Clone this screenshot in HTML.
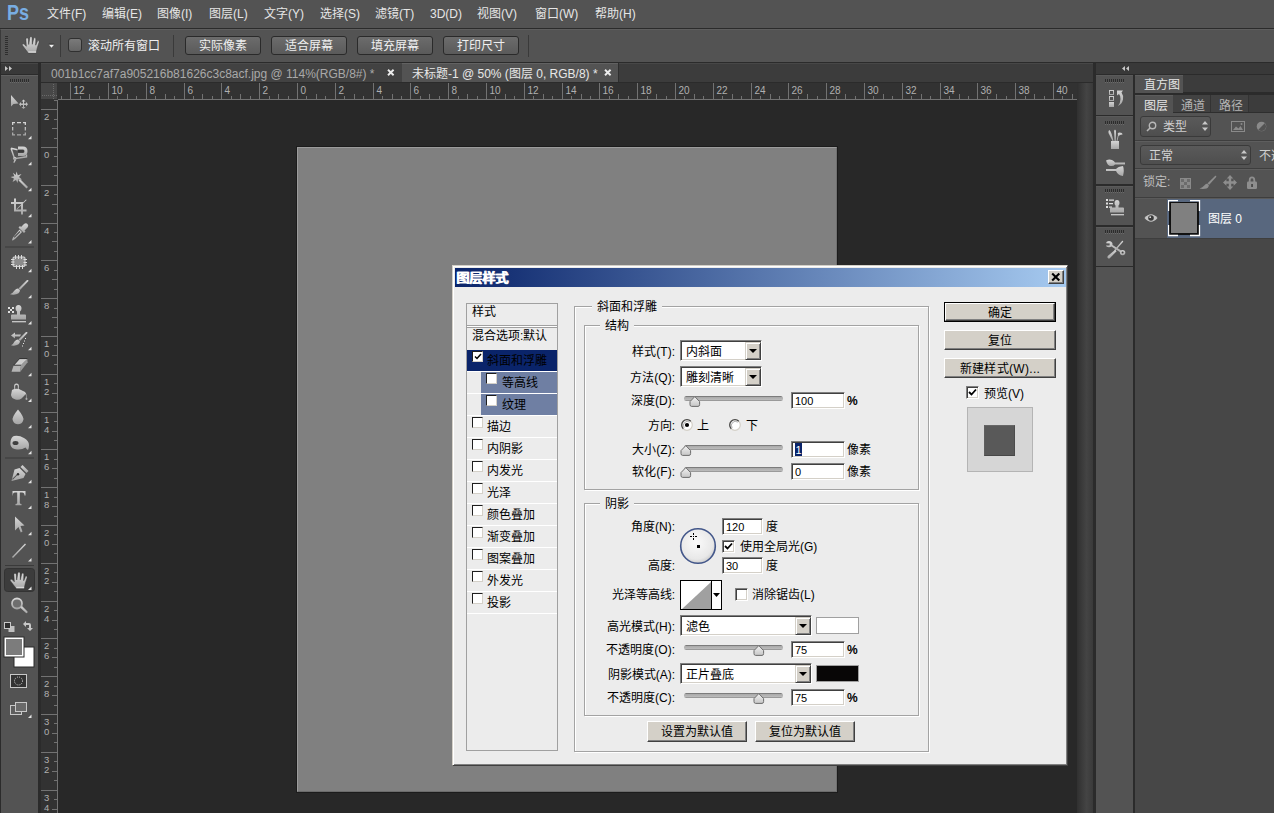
<!DOCTYPE html>
<html lang="zh-CN">
<head>
<meta charset="utf-8">
<style>
*{box-sizing:border-box}
html,body{margin:0;padding:0}
body{width:1274px;height:813px;position:relative;overflow:hidden;background:#282828;font-family:"Liberation Sans",sans-serif;font-size:12px;line-height:1}
.a{position:absolute}
.t{position:absolute;white-space:nowrap;line-height:12px}
.mn{color:#e6e6e6;top:8px;font-size:12px}
.obtn{position:absolute;top:36px;height:19px;width:76px;border:1px solid #2a2a2a;border-radius:3px;background:linear-gradient(#6c6c6c,#5a5a5a);color:#f0f0f0;text-align:center;line-height:19px;font-size:12px}
.tool{position:absolute;left:0;width:38px;height:26px}
.grip{position:absolute;height:3px;background:repeating-linear-gradient(90deg,#2e2e2e 0 1px,transparent 1px 2px)}

.dlg{position:absolute;left:452px;top:265px;width:616px;height:501px;background:#ececec;border:1px solid;border-color:#d4d0c8 #404040 #404040 #d4d0c8;box-shadow:inset 1px 1px 0 #fff,inset -1px -1px 0 #808080}
.d{position:absolute;white-space:nowrap;color:#000;font-size:12px;line-height:12px;padding-top:1px}
.lbl{position:absolute;white-space:nowrap;color:#000;font-size:12px;line-height:12px;padding-top:1px;left:515px;width:160px;text-align:right}
.sunk{position:absolute;background:#fff;border:1px solid;border-color:#808080 #fff #fff #808080;box-shadow:inset 1px 1px 0 #404040,inset -1px -1px 0 #d4d0c8}
.inp{position:absolute;background:#fff;border:1px solid;border-color:#808080 #fff #fff #808080;box-shadow:inset 1px 1px 0 #404040,inset -1px -1px 0 #d4d0c8;font-size:11px;line-height:17px;padding-left:3px;color:#000}
.rais{position:absolute;background:#d4d0c8;border:1px solid;border-color:#fff #404040 #404040 #fff;box-shadow:inset -1px -1px 0 #808080;text-align:center;color:#000;font-size:12px}
.grp{position:absolute;border:1px solid #a3a3a3;box-shadow:inset 1px 1px 0 #fff,1px 1px 0 #fff}
.gl{position:absolute;background:#ececec;padding:1px 5px 0 5px;font-size:12px;line-height:12px;white-space:nowrap}
.cbx{position:absolute;width:11px;height:11px;background:#fff;border:1px solid;border-color:#1e1e1e #d4d0c8 #d4d0c8 #1e1e1e}
.cb13{position:absolute;width:13px;height:13px;background:#fff;border:1px solid;border-color:#808080 #fff #fff #808080;box-shadow:inset 1px 1px 0 #404040,inset -1px -1px 0 #d4d0c8}
.row{position:absolute;left:467px;width:90px;height:22px;border-bottom:1px solid #fff}
.trk{position:absolute;width:99px;height:5px;border-radius:3px;background:linear-gradient(#7c7c7c 0,#7c7c7c 1px,#a9a9a9 1px,#bcbcbc 4px,#9a9a9a 4px)}
.thm{position:absolute;width:12px;height:11px}
.dd{position:absolute;top:1px;right:0;width:16px;bottom:0;background:#d4d0c8;border:1px solid;border-color:#d4d0c8 #404040 #404040 #d4d0c8;box-shadow:inset 1px 1px 0 #fff,inset -1px -1px 0 #808080}
.dd:after{content:"";position:absolute;left:2.5px;top:5.5px;border-left:4px solid transparent;border-right:4px solid transparent;border-top:4px solid #000}
</style>
</head>
<body>
<!-- menu bar -->
<div class="a" style="left:0;top:0;width:1274px;height:28px;background:#535353"></div>
<div class="a" style="left:0;top:28px;width:1274px;height:1px;background:#2b2b2b"></div>
<div class="t" style="left:7px;top:2px;font-size:22px;line-height:22px;font-weight:bold;color:#78ade2;transform:scaleX(0.82);transform-origin:0 0;letter-spacing:0px">Ps</div>
<div class="t mn" style="left:47px">文件(F)</div>
<div class="t mn" style="left:102px">编辑(E)</div>
<div class="t mn" style="left:157px">图像(I)</div>
<div class="t mn" style="left:209px">图层(L)</div>
<div class="t mn" style="left:264px">文字(Y)</div>
<div class="t mn" style="left:320px">选择(S)</div>
<div class="t mn" style="left:375px">滤镜(T)</div>
<div class="t mn" style="left:430px">3D(D)</div>
<div class="t mn" style="left:477px">视图(V)</div>
<div class="t mn" style="left:535px">窗口(W)</div>
<div class="t mn" style="left:595px">帮助(H)</div>
<!-- options bar -->
<div class="a" style="left:0;top:29px;width:1274px;height:33px;background:#535353;border-top:1px solid #5e5e5e;border-left:1px solid #3a3a3a"></div>
<div class="a" style="left:0;top:62px;width:1274px;height:1px;background:#2b2b2b"></div>
<div class="a" style="left:5px;top:36px;width:3px;height:20px;background:repeating-linear-gradient(#2e2e2e 0 1px,transparent 1px 2px)"></div>
<svg class="a" style="left:0;top:0" width="60" height="60"><defs><linearGradient id="hg" x1="0" y1="0" x2="0" y2="1"><stop offset="0" stop-color="#e2e2e2"/><stop offset="1" stop-color="#a6a6a6"/></linearGradient>
<symbol id="hand" viewBox="0 0 60 60"><path d="M28 52.8 L22.3 45.2 Q21.8 43.9 23 43.7 Q24 43.6 25 44.8 L26.3 46.3 L25.9 39.2 Q25.9 37.7 27 37.7 Q28.2 37.7 28.3 39.2 L28.7 44.5 L29.8 38 Q29.9 36.4 31 36.4 Q32.1 36.4 32.1 38 L32.3 44.3 L33.6 39 Q33.8 37.5 34.8 37.5 Q35.9 37.6 35.8 39 L35.7 45.2 L37.1 42 Q37.4 40.5 38.3 40.6 Q39.4 40.8 39.1 42.2 L37.4 47.5 L36.2 52.8 Z" fill="url(#hg)" stroke="#353535" stroke-width="0.5"/><rect x="28.3" y="51.3" width="7.8" height="1.5" fill="#d8d8d8"/></symbol></defs>
<use href="#hand" x="0" y="0" width="60" height="60"/></svg>
<svg class="a" style="left:48px;top:43px" width="7" height="5"><path d="M0.8 1.5 H6.2 L3.5 4.8 Z" fill="#f0f0f0"/><rect x="0.8" y="0.6" width="5.4" height="0.9" fill="#333"/></svg>
<div class="a" style="left:60px;top:35px;width:1px;height:22px;background:#3a3a3a"></div>
<div class="a" style="left:68px;top:38px;width:14px;height:14px;border:1.5px solid #303030;border-radius:3px;background:linear-gradient(#7a7a7a,#656565)"></div>
<div class="t" style="left:88px;top:40px;color:#f0f0f0">滚动所有窗口</div>
<div class="a" style="left:173px;top:35px;width:1px;height:22px;background:#3a3a3a"></div>
<div class="obtn" style="left:185px">实际像素</div>
<div class="obtn" style="left:271px">适合屏幕</div>
<div class="obtn" style="left:357px">填充屏幕</div>
<div class="obtn" style="left:443px">打印尺寸</div>
<div class="a" style="left:528px;top:35px;width:1px;height:22px;background:#3a3a3a"></div>
<!-- tool panel -->
<div class="a" style="left:0;top:63px;width:41px;height:750px;background:#2b2b2b"></div>
<div class="a" style="left:1px;top:63px;width:37px;height:11px;background:#393939;border-top:1px solid #464646"></div>
<svg class="a" style="left:5px;top:66px" width="8" height="5"><path d="M0 0 L3 2.5 L0 5 Z M4 0 L7 2.5 L4 5 Z" fill="#c8c8c8"/></svg>
<div class="a" style="left:1px;top:75px;width:37px;height:738px;background:#535353;border-top:1px solid #606060"></div>
<svg class="a" style="left:10px;top:79px" width="20" height="4"><defs><pattern id="gp0" width="2" height="4" patternUnits="userSpaceOnUse"><rect x="0" y="0" width="1" height="3" fill="#2c2c2c"/><rect x="0" y="3" width="1" height="1" fill="#6a6a6a"/></pattern></defs><rect x="0" y="0" width="20" height="4" fill="url(#gp0)"/></svg>
<!-- doc area -->
<div class="a" style="left:41px;top:63px;width:1052px;height:20px;background:#3c3c3c;border-top:1px solid #474747"></div>
<div class="a" style="left:618px;top:63px;width:1px;height:19px;background:#2e2e2e"></div>
<div class="a" style="left:41px;top:63px;width:361px;height:19px;background:#424242;border-top:1px solid #4a4a4a"></div>
<div class="t" style="left:51px;top:68px;color:#a9a9a9">001b1cc7af7a905216b81626c3c8acf.jpg @ 114%(RGB/8#) *</div>
<svg class="a" style="left:387px;top:69px" width="8" height="7"><path d="M1 0.8 L6.6 6.2 M6.6 0.8 L1 6.2" stroke="#ececec" stroke-width="1.9"/></svg>
<div class="a" style="left:402px;top:63px;width:216px;height:20px;background:#535353;border-top:1px solid #626262"></div>
<div class="t" style="left:412px;top:68px;color:#e8e8e8">未标题-1 @ 50% (图层 0, RGB/8) *</div>
<svg class="a" style="left:604px;top:69px" width="8" height="7"><path d="M1 0.8 L6.6 6.2 M6.6 0.8 L1 6.2" stroke="#ececec" stroke-width="1.9"/></svg>
<div class="a" style="left:41px;top:82px;width:1052px;height:1px;background:#2b2b2b"></div>
<div class="a" style="left:1077px;top:83px;width:16px;height:730px;background:linear-gradient(90deg,#303030,#444 60%,#3a3a3a)"></div>
<!-- document -->
<div class="a" style="left:296px;top:146px;width:542px;height:647px;background:#1c1c1c"></div>
<div class="a" style="left:297px;top:147px;width:540px;height:645px;background:#808080;border-top:1px solid #9c9c9c;border-left:1px solid #9c9c9c;border-right:1px solid #707070;border-bottom:1px solid #6c6c6c"></div>
<!-- tools icons -->
<svg class="a" style="left:0;top:0" width="41" height="813">
<defs>
<linearGradient id="ig" x1="0" y1="0" x2="0" y2="1"><stop offset="0" stop-color="#d6d6d6"/><stop offset="1" stop-color="#a4a4a4"/></linearGradient>
<symbol id="tri"><path d="M3.5 0 V3.5 H0 Z" fill="#e6e6e6"/></symbol>
</defs>
<g fill="url(#ig)" stroke="none">
<!-- move -->
<path d="M11 95 L11 106.5 L13.5 104 L18.5 103.5 Z"/>
<path d="M23.5 99.5 L21.5 101.5 H23 V103.5 H21 V102 L19 104.3 L21 106.5 V105 H23 V107 H21.5 L23.5 109 L25.5 107 H24 V105 H26 V106.5 L28 104.3 L26 102 V103.5 H24 V101.5 H25.5 Z"/>
<!-- marquee -->
<path d="M12 122 h3 v1.3 h-1.7 v1.7 h-1.3 Z M17 122 h4 v1.3 h-4 Z M23 122 h3 v3 h-1.3 v-1.7 h-1.7 Z M12 127 h1.3 v3.5 h-1.3 Z M24.7 127 h1.3 v3.5 h-1.3 Z M12 132.5 h1.3 v1.7 h1.7 v1.3 h-3 Z M17 134.2 h4 v1.3 h-4 Z M24.7 132.5 h1.3 v3 h-3 v-1.3 h1.7 Z"/>
<!-- lasso magnetic -->
<path d="M11 148.3 L17.5 149.8 M11 148.3 L14.6 158.8 L26.5 156.8 V154.5" fill="none" stroke="url(#ig)" stroke-width="1.4"/>
<path d="M18 146.5 H23 Q27.5 146.5 27.5 151.2 Q27.5 156 23 156 H18 V153 H23 Q24.5 153 24.5 151.2 Q24.5 149.5 23 149.5 H18 Z" fill="url(#ig)"/>
<path d="M18 150 H23 Q24 150 24 151.2 Q24 152.5 23 152.5 H18 Z" fill="#3a3a3a"/>
<circle cx="14.8" cy="158.6" r="1.3" fill="none" stroke="url(#ig)" stroke-width="1"/>
<path d="M15.3 159.8 L13.8 162.8" stroke="url(#ig)" stroke-width="1.4"/>
<!-- magic wand -->
<path d="M16.5 171.5 L17.8 175.2 L21.5 174 L19 177 L22 179.5 L18.2 179.5 L17.5 183 L16 180 L12.5 182 L14 178.5 L10.5 177 L14.3 176.3 L13 172.7 L15.8 175 Z"/>
<path d="M18.5 180.5 L20 179 L28 187 L26.5 188.5 Z"/>
<!-- crop -->
<path d="M14 198.5 H16 V202 H23 V209.5 H26.5 V211.5 H23 V214.5 H21 V211.5 H14 V204 H11 V202 H14 Z M16 204 V209.5 H21 V204 Z" fill-rule="evenodd"/>
<path d="M16.5 209 L26 199.5 L26.6 200.1 L17.1 209.6 Z"/>
<!-- eyedropper -->
<path d="M21 227 L24 224 Q26 222.5 27.5 224 Q29 225.5 27.5 227.5 L24.5 230.5 L25.5 231.5 L24 233 L18.5 227.5 L20 226 Z"/>
<path d="M19.5 229.5 L22 232 L15 239 Q13 240.5 12 240.5 Q12 239.5 13 237.5 Z M19.5 231 L13.8 237 L14.6 237.8 L20.5 232 Z" fill-rule="evenodd"/>
<!-- healing/patch -->
<path d="M14 257 H24 L25 258 V265.5 L24 266.5 H14 L13 265.5 V258 Z" fill="#8c8c8c" stroke="#d0d0d0" stroke-width="1.1"/>
<path d="M15 255 h1 v4 h-1 Z M18 255 h1 v4 h-1 Z M21 255 h1 v4 h-1 Z M16 265 h1 v4 h-1 Z M19 265 h1 v4 h-1 Z M22 265 h1 v4 h-1 Z M11 259 h3.5 v1 h-3.5 Z M11 261.5 h3.5 v1 h-3.5 Z M11 264 h3.5 v1 h-3.5 Z M23.5 259 h3.5 v1 h-3.5 Z M23.5 262 h3.5 v1 h-3.5 Z M23.5 264.5 h3.5 v1 h-3.5 Z" fill="#dcdcdc"/>
<!-- brush -->
<path d="M27 280 Q28.5 279.5 28.5 281 L20 290 L18.5 288.5 Z"/>
<path d="M18 288.5 L20 290.5 Q19.5 294 15 294.5 Q12 295 10 294.3 Q13 293 14.5 290.5 Q16 288.5 18 288.5 Z"/>
<!-- stamp -->
<path d="M8 307 h2 v2 h-2 Z M12 307 h2 v2 h-2 Z M10 309 h2 v2 h-2 Z M8 311 h2 v2 h-2 Z M12 311 h2 v2 h-2 Z" fill="#e0e0e0"/>
<path d="M18.5 305 Q21.5 305 21.5 308.5 Q21.5 310.5 20 311.5 V314.5 H25 Q26 314.5 26 315.5 V319.5 H11 V315.5 Q11 314.5 12 314.5 H17 V311.5 Q15.5 310.5 15.5 308.5 Q15.5 305 18.5 305 Z"/>
<path d="M12 321 H26 V322.5 H12 Z"/>
<!-- history brush -->
<path d="M11 335.5 L15 332.5 V334.5 H21 L20 336.5 H15 V338.5 Z"/>
<path d="M26 332 Q27.5 331.5 27.5 333 L20 341 L18.5 339.5 Z"/>
<path d="M18 339.5 L20 341.5 Q19.5 345 15 345.5 Q12.5 346 11 345.3 Q13.5 344 14.5 341.5 Q16 339.5 18 339.5 Z"/>
<path d="M25 338 h1 v1 h-1 Z M24 340.5 h1 v1 h-1 Z M23 343 h1 v1 h-1 Z M22 345.5 h1 v1 h-1 Z" fill="#e8e8e8"/>
<!-- eraser -->
<path d="M19.3 358.9 H27.3 L21 365.2 H13.7 Z" fill="#cdcdcd"/>
<path d="M13.7 365.2 H21 L20.3 371.8 H11.5 Z" fill="#b4b4b4"/>
<path d="M21 365.2 L27.3 358.9 L27.6 362.3 L20.3 371.8 Z" fill="#9a9a9a"/>
<path d="M19.3 358.6 H27.3 M13.5 365.2 H21 M13.7 365.2 L19.3 358.9" fill="none" stroke="#2a2a2a" stroke-width="0.8"/>
<!-- paint bucket -->
<path d="M16.5 383.5 Q19 383.5 19 386.5 V389 L17.8 389 V386.5 Q17.8 384.8 16.5 384.8 Q15.2 384.8 15.2 386.5 V389 H14 V386.5 Q14 383.5 16.5 383.5 Z"/>
<path d="M12 390 Q15 388 19 389 L24 391.5 Q26.5 393 24.5 395.5 L21.5 398.5 Q19 400.5 15.5 399.5 Q11.5 398.5 11 395 Z"/>
<path d="M23.5 391.5 Q26.5 392 26.5 396 V397.5 Q27.5 398 27.5 399 Q27.5 400 26.5 400 Q25.5 400 25.5 399 Q25.5 398 26 397.5 V396 Q26 393.5 23.5 393.5 Z"/>
<!-- blur drop -->
<path d="M18 409.5 Q21 413 22.5 416 Q24 418.5 23 421 Q21.5 424.3 18 424.3 Q14.5 424.3 13 421 Q12 418.5 13.5 416 Q15 413 18 409.5 Z"/>
<!-- dodge -->
<path d="M14 436 Q19 435 24 438 Q29 441 29 445 Q29 448 28 450 Q26.5 449 25.5 447.5 Q22 450 17 449.5 Q11.5 449 10.5 445 Q10 440 12 437.5 Q13 436.3 14 436 Z"/>
<path d="M15.5 441 Q18.5 441 18.5 443 Q18.5 445 15.5 445 Q12.5 445 12.5 443 Q12.5 441 15.5 441 Z" fill="#404040"/>
<!-- pen -->
<path d="M22.5 465 L28.5 471 L26.5 473 L20.5 467 Z"/>
<path d="M19.5 468 L25.5 474 L23.5 478 L11.5 481 L14.5 469.5 Z M12.8 479.8 L18 474.6 L17.3 473.9 L12.1 479.1 Z" fill-rule="evenodd"/>
<circle cx="18" cy="474.3" r="1.2" fill="#303030"/>
<!-- type T -->
<path d="M12.5 491 H25.5 V495.5 H24.5 Q24.5 492.5 22 492.5 H19.8 V503 Q19.8 504 21.5 504 V505.3 H15.5 V504 Q17.2 504 17.2 503 V492.5 H15 Q12.8 492.5 12.8 495.5 H12.5 Z"/>
<!-- path selection -->
<path d="M15 516.5 L24.5 525.5 L20.5 526 L22.5 531.5 L20.8 532.5 L18.5 527 L15 530.5 Z"/>
<!-- line -->
<path d="M25 543.5 L26 544.5 L13 558 L12 557 Z"/>
</g>
<!-- corner triangles -->
<g fill="#e4e4e4"><path d="M31.5 135.7 V139.2 H28 Z"/><path d="M31.5 161.7 V165.2 H28 Z"/><path d="M31.5 187.8 V191.3 H28 Z"/><path d="M31.5 213.8 V217.3 H28 Z"/><path d="M31.5 239.9 V243.4 H28 Z"/><path d="M31.5 268.7 V272.2 H28 Z"/><path d="M31.5 294.8 V298.3 H28 Z"/><path d="M31.5 320.9 V324.4 H28 Z"/><path d="M31.5 346.7 V350.2 H28 Z"/><path d="M31.5 372.8 V376.3 H28 Z"/><path d="M31.5 398.4 V401.9 H28 Z"/><path d="M31.5 424.7 V428.2 H28 Z"/><path d="M31.5 450.8 V454.3 H28 Z"/><path d="M31.5 479.8 V483.3 H28 Z"/><path d="M31.5 505.6 V509.1 H28 Z"/><path d="M31.5 531.7 V535.2 H28 Z"/><path d="M31.5 557.9 V561.4 H28 Z"/><path d="M31.5 586.5 V590.0 H28 Z"/><path d="M31.5 714.5 V718.0 H28 Z"/></g>
<!-- separators -->
<rect x="5" y="246.5" width="29" height="1" fill="#3a3a3a"/>
<rect x="5" y="457.5" width="29" height="1" fill="#3a3a3a"/>
<rect x="5" y="565" width="29" height="1" fill="#3a3a3a"/>
<!-- hand selected -->
<rect x="4.5" y="568.5" width="30" height="23" rx="3" fill="#3c3c3c" stroke="#333"/>
<use href="#hand" x="-12" y="535.5" width="60" height="60"/>
<path d="M31.5 586.5 V590 H28 Z" fill="#e4e4e4"/>
<!-- zoom -->
<circle cx="17" cy="603.5" r="5" fill="#6e6e6e" stroke="url(#ig)" stroke-width="1.8"/>
<path d="M20.3 607.8 L22 606 L27.5 611.5 Q28 613 26.3 613.3 Z" fill="url(#ig)"/>
<!-- default colors -->
<rect x="8.5" y="626" width="6" height="6" fill="#c0c0c0"/>
<rect x="4.5" y="622.5" width="6" height="6" fill="#2e2e2e" stroke="#c8c8c8" stroke-width="1"/>
<!-- swap -->
<path d="M23 624 L26 621 V623 H29 Q31 623 31 625 V628 H33 L30 631 L27 628 H29 V625 H26 V627 Z" fill="#c8c8c8"/>
<!-- colors -->
<rect x="14" y="647" width="20" height="20" fill="#fff" stroke="#2a2a2a" stroke-width="1"/>
<rect x="4" y="637" width="20" height="20" fill="#fff" stroke="#2a2a2a" stroke-width="1"/>
<rect x="6" y="639" width="16" height="16" fill="#7c7c7c"/>
<!-- quick mask -->
<rect x="10.5" y="674.5" width="16" height="13" fill="#333" stroke="#c8c8c8" stroke-width="1"/>
<circle cx="18.5" cy="681" r="4" fill="none" stroke="#d0d0d0" stroke-width="1" stroke-dasharray="1 1.1"/>
<!-- screen mode -->
<rect x="10.5" y="705.5" width="11" height="9" fill="#5e5e5e" stroke="#c8c8c8"/>
<rect x="15.5" y="702.5" width="11" height="9" fill="#6a6a6a" stroke="#c8c8c8"/>
</svg>
<svg class="a" style="left:41px;top:83px" width="1036" height="17" shape-rendering="crispEdges"><rect x="0" y="0" width="1036" height="17" fill="#323232"/><rect x="16" y="16" width="1020" height="1" fill="#727272"/><rect x="0" y="0" width="16" height="16" fill="#474747"/><rect x="12" y="1" width="1" height="1" fill="#6a6a6a"/><rect x="12" y="3" width="1" height="1" fill="#6a6a6a"/><rect x="12" y="5" width="1" height="1" fill="#6a6a6a"/><rect x="12" y="7" width="1" height="1" fill="#6a6a6a"/><rect x="12" y="9" width="1" height="1" fill="#6a6a6a"/><rect x="12" y="11" width="1" height="1" fill="#6a6a6a"/><rect x="12" y="13" width="1" height="1" fill="#6a6a6a"/><rect x="12" y="15" width="1" height="1" fill="#6a6a6a"/><rect x="1" y="12" width="1" height="1" fill="#6a6a6a"/><rect x="3" y="12" width="1" height="1" fill="#6a6a6a"/><rect x="5" y="12" width="1" height="1" fill="#6a6a6a"/><rect x="7" y="12" width="1" height="1" fill="#6a6a6a"/><rect x="9" y="12" width="1" height="1" fill="#6a6a6a"/><rect x="11" y="12" width="1" height="1" fill="#6a6a6a"/><rect x="13" y="12" width="1" height="1" fill="#6a6a6a"/><rect x="15" y="12" width="1" height="1" fill="#6a6a6a"/><rect x="20" y="13" width="1" height="3" fill="#727272"/><rect x="29" y="0" width="1" height="16" fill="#727272"/><rect x="39" y="13" width="1" height="3" fill="#727272"/><rect x="48" y="11" width="1" height="5" fill="#727272"/><rect x="58" y="13" width="1" height="3" fill="#727272"/><text x="32.5" y="11" font-size="10" fill="#b0b0b0" font-family="Liberation Sans" shape-rendering="auto">12</text><rect x="67" y="0" width="1" height="16" fill="#727272"/><rect x="76" y="13" width="1" height="3" fill="#727272"/><rect x="86" y="11" width="1" height="5" fill="#727272"/><rect x="95" y="13" width="1" height="3" fill="#727272"/><text x="70.5" y="11" font-size="10" fill="#b0b0b0" font-family="Liberation Sans" shape-rendering="auto">10</text><rect x="105" y="0" width="1" height="16" fill="#727272"/><rect x="114" y="13" width="1" height="3" fill="#727272"/><rect x="124" y="11" width="1" height="5" fill="#727272"/><rect x="133" y="13" width="1" height="3" fill="#727272"/><text x="108.5" y="11" font-size="10" fill="#b0b0b0" font-family="Liberation Sans" shape-rendering="auto">8</text><rect x="143" y="0" width="1" height="16" fill="#727272"/><rect x="152" y="13" width="1" height="3" fill="#727272"/><rect x="161" y="11" width="1" height="5" fill="#727272"/><rect x="171" y="13" width="1" height="3" fill="#727272"/><text x="146.5" y="11" font-size="10" fill="#b0b0b0" font-family="Liberation Sans" shape-rendering="auto">6</text><rect x="180" y="0" width="1" height="16" fill="#727272"/><rect x="190" y="13" width="1" height="3" fill="#727272"/><rect x="199" y="11" width="1" height="5" fill="#727272"/><rect x="209" y="13" width="1" height="3" fill="#727272"/><text x="183.5" y="11" font-size="10" fill="#b0b0b0" font-family="Liberation Sans" shape-rendering="auto">4</text><rect x="218" y="0" width="1" height="16" fill="#727272"/><rect x="228" y="13" width="1" height="3" fill="#727272"/><rect x="237" y="11" width="1" height="5" fill="#727272"/><rect x="247" y="13" width="1" height="3" fill="#727272"/><text x="221.5" y="11" font-size="10" fill="#b0b0b0" font-family="Liberation Sans" shape-rendering="auto">2</text><rect x="256" y="0" width="1" height="16" fill="#727272"/><rect x="265" y="13" width="1" height="3" fill="#727272"/><rect x="275" y="11" width="1" height="5" fill="#727272"/><rect x="284" y="13" width="1" height="3" fill="#727272"/><text x="259.5" y="11" font-size="10" fill="#b0b0b0" font-family="Liberation Sans" shape-rendering="auto">0</text><rect x="294" y="0" width="1" height="16" fill="#727272"/><rect x="303" y="13" width="1" height="3" fill="#727272"/><rect x="313" y="11" width="1" height="5" fill="#727272"/><rect x="322" y="13" width="1" height="3" fill="#727272"/><text x="297.5" y="11" font-size="10" fill="#b0b0b0" font-family="Liberation Sans" shape-rendering="auto">2</text><rect x="332" y="0" width="1" height="16" fill="#727272"/><rect x="341" y="13" width="1" height="3" fill="#727272"/><rect x="351" y="11" width="1" height="5" fill="#727272"/><rect x="360" y="13" width="1" height="3" fill="#727272"/><text x="335.5" y="11" font-size="10" fill="#b0b0b0" font-family="Liberation Sans" shape-rendering="auto">4</text><rect x="369" y="0" width="1" height="16" fill="#727272"/><rect x="379" y="13" width="1" height="3" fill="#727272"/><rect x="388" y="11" width="1" height="5" fill="#727272"/><rect x="398" y="13" width="1" height="3" fill="#727272"/><text x="372.5" y="11" font-size="10" fill="#b0b0b0" font-family="Liberation Sans" shape-rendering="auto">6</text><rect x="407" y="0" width="1" height="16" fill="#727272"/><rect x="417" y="13" width="1" height="3" fill="#727272"/><rect x="426" y="11" width="1" height="5" fill="#727272"/><rect x="436" y="13" width="1" height="3" fill="#727272"/><text x="410.5" y="11" font-size="10" fill="#b0b0b0" font-family="Liberation Sans" shape-rendering="auto">8</text><rect x="445" y="0" width="1" height="16" fill="#727272"/><rect x="454" y="13" width="1" height="3" fill="#727272"/><rect x="464" y="11" width="1" height="5" fill="#727272"/><rect x="473" y="13" width="1" height="3" fill="#727272"/><text x="448.5" y="11" font-size="10" fill="#b0b0b0" font-family="Liberation Sans" shape-rendering="auto">10</text><rect x="483" y="0" width="1" height="16" fill="#727272"/><rect x="492" y="13" width="1" height="3" fill="#727272"/><rect x="502" y="11" width="1" height="5" fill="#727272"/><rect x="511" y="13" width="1" height="3" fill="#727272"/><text x="486.5" y="11" font-size="10" fill="#b0b0b0" font-family="Liberation Sans" shape-rendering="auto">12</text><rect x="521" y="0" width="1" height="16" fill="#727272"/><rect x="530" y="13" width="1" height="3" fill="#727272"/><rect x="540" y="11" width="1" height="5" fill="#727272"/><rect x="549" y="13" width="1" height="3" fill="#727272"/><text x="524.5" y="11" font-size="10" fill="#b0b0b0" font-family="Liberation Sans" shape-rendering="auto">14</text><rect x="558" y="0" width="1" height="16" fill="#727272"/><rect x="568" y="13" width="1" height="3" fill="#727272"/><rect x="577" y="11" width="1" height="5" fill="#727272"/><rect x="587" y="13" width="1" height="3" fill="#727272"/><text x="561.5" y="11" font-size="10" fill="#b0b0b0" font-family="Liberation Sans" shape-rendering="auto">16</text><rect x="596" y="0" width="1" height="16" fill="#727272"/><rect x="606" y="13" width="1" height="3" fill="#727272"/><rect x="615" y="11" width="1" height="5" fill="#727272"/><rect x="625" y="13" width="1" height="3" fill="#727272"/><text x="599.5" y="11" font-size="10" fill="#b0b0b0" font-family="Liberation Sans" shape-rendering="auto">18</text><rect x="634" y="0" width="1" height="16" fill="#727272"/><rect x="643" y="13" width="1" height="3" fill="#727272"/><rect x="653" y="11" width="1" height="5" fill="#727272"/><rect x="662" y="13" width="1" height="3" fill="#727272"/><text x="637.5" y="11" font-size="10" fill="#b0b0b0" font-family="Liberation Sans" shape-rendering="auto">20</text><rect x="672" y="0" width="1" height="16" fill="#727272"/><rect x="681" y="13" width="1" height="3" fill="#727272"/><rect x="691" y="11" width="1" height="5" fill="#727272"/><rect x="700" y="13" width="1" height="3" fill="#727272"/><text x="675.5" y="11" font-size="10" fill="#b0b0b0" font-family="Liberation Sans" shape-rendering="auto">22</text><rect x="710" y="0" width="1" height="16" fill="#727272"/><rect x="719" y="13" width="1" height="3" fill="#727272"/><rect x="729" y="11" width="1" height="5" fill="#727272"/><rect x="738" y="13" width="1" height="3" fill="#727272"/><text x="713.5" y="11" font-size="10" fill="#b0b0b0" font-family="Liberation Sans" shape-rendering="auto">24</text><rect x="747" y="0" width="1" height="16" fill="#727272"/><rect x="757" y="13" width="1" height="3" fill="#727272"/><rect x="766" y="11" width="1" height="5" fill="#727272"/><rect x="776" y="13" width="1" height="3" fill="#727272"/><text x="750.5" y="11" font-size="10" fill="#b0b0b0" font-family="Liberation Sans" shape-rendering="auto">26</text><rect x="785" y="0" width="1" height="16" fill="#727272"/><rect x="795" y="13" width="1" height="3" fill="#727272"/><rect x="804" y="11" width="1" height="5" fill="#727272"/><rect x="814" y="13" width="1" height="3" fill="#727272"/><text x="788.5" y="11" font-size="10" fill="#b0b0b0" font-family="Liberation Sans" shape-rendering="auto">28</text><rect x="823" y="0" width="1" height="16" fill="#727272"/><rect x="832" y="13" width="1" height="3" fill="#727272"/><rect x="842" y="11" width="1" height="5" fill="#727272"/><rect x="851" y="13" width="1" height="3" fill="#727272"/><text x="826.5" y="11" font-size="10" fill="#b0b0b0" font-family="Liberation Sans" shape-rendering="auto">30</text><rect x="861" y="0" width="1" height="16" fill="#727272"/><rect x="870" y="13" width="1" height="3" fill="#727272"/><rect x="880" y="11" width="1" height="5" fill="#727272"/><rect x="889" y="13" width="1" height="3" fill="#727272"/><text x="864.5" y="11" font-size="10" fill="#b0b0b0" font-family="Liberation Sans" shape-rendering="auto">32</text><rect x="899" y="0" width="1" height="16" fill="#727272"/><rect x="908" y="13" width="1" height="3" fill="#727272"/><rect x="918" y="11" width="1" height="5" fill="#727272"/><rect x="927" y="13" width="1" height="3" fill="#727272"/><text x="902.5" y="11" font-size="10" fill="#b0b0b0" font-family="Liberation Sans" shape-rendering="auto">34</text><rect x="936" y="0" width="1" height="16" fill="#727272"/><rect x="946" y="13" width="1" height="3" fill="#727272"/><rect x="955" y="11" width="1" height="5" fill="#727272"/><rect x="965" y="13" width="1" height="3" fill="#727272"/><text x="939.5" y="11" font-size="10" fill="#b0b0b0" font-family="Liberation Sans" shape-rendering="auto">36</text><rect x="974" y="0" width="1" height="16" fill="#727272"/><rect x="984" y="13" width="1" height="3" fill="#727272"/><rect x="993" y="11" width="1" height="5" fill="#727272"/><rect x="1003" y="13" width="1" height="3" fill="#727272"/><text x="977.5" y="11" font-size="10" fill="#b0b0b0" font-family="Liberation Sans" shape-rendering="auto">38</text><rect x="1012" y="0" width="1" height="16" fill="#727272"/><rect x="1021" y="13" width="1" height="3" fill="#727272"/><rect x="1031" y="11" width="1" height="5" fill="#727272"/><text x="1015.5" y="11" font-size="10" fill="#b0b0b0" font-family="Liberation Sans" shape-rendering="auto">40</text></svg>
<svg class="a" style="left:41px;top:99px" width="17" height="714" shape-rendering="crispEdges"><rect x="0" y="0" width="17" height="714" fill="#323232"/><rect x="16" y="1" width="1" height="714" fill="#727272"/><rect x="13" y="1" width="3" height="1" fill="#727272"/><rect x="0" y="10" width="16" height="1" fill="#727272"/><rect x="13" y="20" width="3" height="1" fill="#727272"/><rect x="11" y="29" width="5" height="1" fill="#727272"/><rect x="13" y="39" width="3" height="1" fill="#727272"/><text x="3" y="21.0" font-size="9.5" fill="#b0b0b0" font-family="Liberation Sans" shape-rendering="auto">2</text><rect x="0" y="48" width="16" height="1" fill="#727272"/><rect x="13" y="57" width="3" height="1" fill="#727272"/><rect x="11" y="67" width="5" height="1" fill="#727272"/><rect x="13" y="76" width="3" height="1" fill="#727272"/><text x="3" y="59.0" font-size="9.5" fill="#b0b0b0" font-family="Liberation Sans" shape-rendering="auto">0</text><rect x="0" y="86" width="16" height="1" fill="#727272"/><rect x="13" y="95" width="3" height="1" fill="#727272"/><rect x="11" y="105" width="5" height="1" fill="#727272"/><rect x="13" y="114" width="3" height="1" fill="#727272"/><text x="3" y="97.0" font-size="9.5" fill="#b0b0b0" font-family="Liberation Sans" shape-rendering="auto">2</text><rect x="0" y="124" width="16" height="1" fill="#727272"/><rect x="13" y="133" width="3" height="1" fill="#727272"/><rect x="11" y="142" width="5" height="1" fill="#727272"/><rect x="13" y="152" width="3" height="1" fill="#727272"/><text x="3" y="135.0" font-size="9.5" fill="#b0b0b0" font-family="Liberation Sans" shape-rendering="auto">4</text><rect x="0" y="161" width="16" height="1" fill="#727272"/><rect x="13" y="171" width="3" height="1" fill="#727272"/><rect x="11" y="180" width="5" height="1" fill="#727272"/><rect x="13" y="190" width="3" height="1" fill="#727272"/><text x="3" y="172.0" font-size="9.5" fill="#b0b0b0" font-family="Liberation Sans" shape-rendering="auto">6</text><rect x="0" y="199" width="16" height="1" fill="#727272"/><rect x="13" y="209" width="3" height="1" fill="#727272"/><rect x="11" y="218" width="5" height="1" fill="#727272"/><rect x="13" y="228" width="3" height="1" fill="#727272"/><text x="3" y="210.0" font-size="9.5" fill="#b0b0b0" font-family="Liberation Sans" shape-rendering="auto">8</text><rect x="0" y="237" width="16" height="1" fill="#727272"/><rect x="13" y="246" width="3" height="1" fill="#727272"/><rect x="11" y="256" width="5" height="1" fill="#727272"/><rect x="13" y="265" width="3" height="1" fill="#727272"/><text x="3" y="248.0" font-size="9.5" fill="#b0b0b0" font-family="Liberation Sans" shape-rendering="auto">1</text><text x="3" y="258.0" font-size="9.5" fill="#b0b0b0" font-family="Liberation Sans" shape-rendering="auto">0</text><rect x="0" y="275" width="16" height="1" fill="#727272"/><rect x="13" y="284" width="3" height="1" fill="#727272"/><rect x="11" y="294" width="5" height="1" fill="#727272"/><rect x="13" y="303" width="3" height="1" fill="#727272"/><text x="3" y="286.0" font-size="9.5" fill="#b0b0b0" font-family="Liberation Sans" shape-rendering="auto">1</text><text x="3" y="296.0" font-size="9.5" fill="#b0b0b0" font-family="Liberation Sans" shape-rendering="auto">2</text><rect x="0" y="313" width="16" height="1" fill="#727272"/><rect x="13" y="322" width="3" height="1" fill="#727272"/><rect x="11" y="332" width="5" height="1" fill="#727272"/><rect x="13" y="341" width="3" height="1" fill="#727272"/><text x="3" y="324.0" font-size="9.5" fill="#b0b0b0" font-family="Liberation Sans" shape-rendering="auto">1</text><text x="3" y="334.0" font-size="9.5" fill="#b0b0b0" font-family="Liberation Sans" shape-rendering="auto">4</text><rect x="0" y="350" width="16" height="1" fill="#727272"/><rect x="13" y="360" width="3" height="1" fill="#727272"/><rect x="11" y="369" width="5" height="1" fill="#727272"/><rect x="13" y="379" width="3" height="1" fill="#727272"/><text x="3" y="361.0" font-size="9.5" fill="#b0b0b0" font-family="Liberation Sans" shape-rendering="auto">1</text><text x="3" y="371.0" font-size="9.5" fill="#b0b0b0" font-family="Liberation Sans" shape-rendering="auto">6</text><rect x="0" y="388" width="16" height="1" fill="#727272"/><rect x="13" y="398" width="3" height="1" fill="#727272"/><rect x="11" y="407" width="5" height="1" fill="#727272"/><rect x="13" y="417" width="3" height="1" fill="#727272"/><text x="3" y="399.0" font-size="9.5" fill="#b0b0b0" font-family="Liberation Sans" shape-rendering="auto">1</text><text x="3" y="409.0" font-size="9.5" fill="#b0b0b0" font-family="Liberation Sans" shape-rendering="auto">8</text><rect x="0" y="426" width="16" height="1" fill="#727272"/><rect x="13" y="435" width="3" height="1" fill="#727272"/><rect x="11" y="445" width="5" height="1" fill="#727272"/><rect x="13" y="454" width="3" height="1" fill="#727272"/><text x="3" y="437.0" font-size="9.5" fill="#b0b0b0" font-family="Liberation Sans" shape-rendering="auto">2</text><text x="3" y="447.0" font-size="9.5" fill="#b0b0b0" font-family="Liberation Sans" shape-rendering="auto">0</text><rect x="0" y="464" width="16" height="1" fill="#727272"/><rect x="13" y="473" width="3" height="1" fill="#727272"/><rect x="11" y="483" width="5" height="1" fill="#727272"/><rect x="13" y="492" width="3" height="1" fill="#727272"/><text x="3" y="475.0" font-size="9.5" fill="#b0b0b0" font-family="Liberation Sans" shape-rendering="auto">2</text><text x="3" y="485.0" font-size="9.5" fill="#b0b0b0" font-family="Liberation Sans" shape-rendering="auto">2</text><rect x="0" y="502" width="16" height="1" fill="#727272"/><rect x="13" y="511" width="3" height="1" fill="#727272"/><rect x="11" y="521" width="5" height="1" fill="#727272"/><rect x="13" y="530" width="3" height="1" fill="#727272"/><text x="3" y="513.0" font-size="9.5" fill="#b0b0b0" font-family="Liberation Sans" shape-rendering="auto">2</text><text x="3" y="523.0" font-size="9.5" fill="#b0b0b0" font-family="Liberation Sans" shape-rendering="auto">4</text><rect x="0" y="539" width="16" height="1" fill="#727272"/><rect x="13" y="549" width="3" height="1" fill="#727272"/><rect x="11" y="558" width="5" height="1" fill="#727272"/><rect x="13" y="568" width="3" height="1" fill="#727272"/><text x="3" y="550.0" font-size="9.5" fill="#b0b0b0" font-family="Liberation Sans" shape-rendering="auto">2</text><text x="3" y="560.0" font-size="9.5" fill="#b0b0b0" font-family="Liberation Sans" shape-rendering="auto">6</text><rect x="0" y="577" width="16" height="1" fill="#727272"/><rect x="13" y="587" width="3" height="1" fill="#727272"/><rect x="11" y="596" width="5" height="1" fill="#727272"/><rect x="13" y="606" width="3" height="1" fill="#727272"/><text x="3" y="588.0" font-size="9.5" fill="#b0b0b0" font-family="Liberation Sans" shape-rendering="auto">2</text><text x="3" y="598.0" font-size="9.5" fill="#b0b0b0" font-family="Liberation Sans" shape-rendering="auto">8</text><rect x="0" y="615" width="16" height="1" fill="#727272"/><rect x="13" y="624" width="3" height="1" fill="#727272"/><rect x="11" y="634" width="5" height="1" fill="#727272"/><rect x="13" y="643" width="3" height="1" fill="#727272"/><text x="3" y="626.0" font-size="9.5" fill="#b0b0b0" font-family="Liberation Sans" shape-rendering="auto">3</text><text x="3" y="636.0" font-size="9.5" fill="#b0b0b0" font-family="Liberation Sans" shape-rendering="auto">0</text><rect x="0" y="653" width="16" height="1" fill="#727272"/><rect x="13" y="662" width="3" height="1" fill="#727272"/><rect x="11" y="672" width="5" height="1" fill="#727272"/><rect x="13" y="681" width="3" height="1" fill="#727272"/><text x="3" y="664.0" font-size="9.5" fill="#b0b0b0" font-family="Liberation Sans" shape-rendering="auto">3</text><text x="3" y="674.0" font-size="9.5" fill="#b0b0b0" font-family="Liberation Sans" shape-rendering="auto">2</text><rect x="0" y="691" width="16" height="1" fill="#727272"/><rect x="13" y="700" width="3" height="1" fill="#727272"/><rect x="11" y="710" width="5" height="1" fill="#727272"/><text x="3" y="702.0" font-size="9.5" fill="#b0b0b0" font-family="Liberation Sans" shape-rendering="auto">3</text><text x="3" y="712.0" font-size="9.5" fill="#b0b0b0" font-family="Liberation Sans" shape-rendering="auto">4</text></svg>
<!-- right dock -->
<div class="a" style="left:1093px;top:63px;width:181px;height:750px;background:#2b2b2b"></div>
<div class="a" style="left:1096px;top:63px;width:178px;height:11px;background:#393939"></div>
<svg class="a" style="left:1122px;top:66px" width="8" height="5"><path d="M3 0 L0 2.5 L3 5 Z M7 0 L4 2.5 L7 5 Z" fill="#c8c8c8"/></svg>
<!-- icon strip -->
<div class="a" style="left:1096px;top:75px;width:37px;height:40px;background:#535353;border-top:1px solid #5a5a5a"></div>
<div class="a" style="left:1096px;top:116px;width:37px;height:68px;background:#535353;border-top:1px solid #5a5a5a"></div>
<div class="a" style="left:1096px;top:186px;width:37px;height:39px;background:#535353;border-top:1px solid #5a5a5a"></div>
<div class="a" style="left:1096px;top:227px;width:37px;height:39px;background:#535353;border-top:1px solid #5a5a5a"></div>
<div class="a" style="left:1096px;top:267px;width:37px;height:546px;background:#535353"></div>

<svg class="a" style="left:1096px;top:75px" width="37" height="200">
<defs>
<pattern id="gp" width="2" height="4" patternUnits="userSpaceOnUse"><rect x="0" y="0" width="1" height="3" fill="#2c2c2c"/><rect x="0" y="3" width="1" height="1" fill="#6a6a6a"/></pattern>
<linearGradient id="ig2" x1="0" y1="0" x2="0" y2="1"><stop offset="0" stop-color="#d4d4d4"/><stop offset="1" stop-color="#a6a6a6"/></linearGradient>
</defs>
<g transform="translate(9,4)"><rect width="20" height="4" fill="url(#gp)"/></g>
<g transform="translate(9,46)"><rect width="20" height="4" fill="url(#gp)"/></g>
<g transform="translate(9,114)"><rect width="20" height="4" fill="url(#gp)"/></g>
<g transform="translate(9,155)"><rect width="20" height="4" fill="url(#gp)"/></g>
<g fill="url(#ig2)">
<!-- history: page y 89..107 => local 14..32 -->
<path d="M13 15 H18 V20 H13 Z M14 16 V19 H17 V16 Z" fill-rule="evenodd"/>
<path d="M13 21 H18 V26 H13 Z M14 22 V25 H17 V22 Z" fill-rule="evenodd"/>
<rect x="13" y="27" width="5" height="5"/>
<path d="M21 15.5 H27 L25.5 17.5 Q27.5 20 27 24.5 Q26 29 22 31 Q24.5 27.5 24.5 24 Q24.5 20.5 23 19 L21 20.5 Z"/>
<!-- brushes: page 129..149 => local 54..74 -->
<rect x="15" y="66" width="8" height="8"/>
<path d="M16.5 66 L12.5 58 Q12 55.5 13.5 55 Q15.5 57 17.5 66 Z"/>
<path d="M18.5 66 L18.2 58 Q17.5 55 19 54.5 Q20.5 55 20 58 L19.8 66 Z"/>
<path d="M20.5 66 L22 60 Q21 57.5 23.5 57.5 Q26.5 57.5 26.5 59.5 Q24 59.5 22.5 61 L21.5 66 Z"/>
<!-- brush presets: page 159..176 => local 84..101 -->
<path d="M10 85.5 Q13 84 16 85 Q18.5 86 19 87.5 H29 V89.5 H19 Q18 91 15 91 Q11.5 91 10 85.5 Z"/>
<path d="M10 94 H20 Q22 91.5 27 91 Q28.5 95 27 101 Q22 100.5 20 96 H10 Z"/>
<!-- clone source: page 199..216 => local 124..141 -->
<path d="M10 124 h2 v2 h-2 Z M10 127.5 h2 v2 h-2 Z M10 131 h2 v2 h-2 Z M13 124.5 h5 v1.2 h-5 Z M13 128 h4 v1.2 h-4 Z M13 131.5 h3 v1.2 h-3 Z" fill="#e0e0e0"/>
<path d="M21 125 Q23.5 125 23.5 128 Q23.5 129.5 22.5 130.5 V132.5 H27 Q28 132.5 28 133.5 V137.5 H14 V133.5 Q14 132.5 15 132.5 H19.5 V130.5 Q18.5 129.5 18.5 128 Q18.5 125 21 125 Z"/>
<rect x="15" y="139" width="13" height="1.5"/>
<!-- tool presets: page 240..258 => local 165..183 -->
<path d="M10.5 167 Q12.5 165.5 15 166.5 Q17 167.5 16.5 170 L26 176 L24.8 177.8 L15.5 171.5 Q13 173 10.5 171.5 L10 170.5 L13.5 170.5 L13.8 168.5 L10.2 168.3 Z"/>
<circle cx="26.6" cy="177.6" r="2.7"/>
<circle cx="26.6" cy="177.6" r="1" fill="#404040"/>
<path d="M26.2 165.8 Q27.3 165.6 27.2 166.8 L19 176.2 L18.1 175.3 Z"/>
<path d="M19.2 174.8 L20.6 176.2 L14 183 Q12.8 184 11.8 183 Q10.9 182 12 180.8 Z"/>
</g>
</svg>

<!-- panels column -->
<div class="a" style="left:1135px;top:75px;width:139px;height:738px;background:#474747"></div>
<!-- histogram tab row -->
<div class="a" style="left:1135px;top:75px;width:139px;height:18px;background:#3c3c3c;border-bottom:1px solid #2b2b2b"></div>
<div class="a" style="left:1135px;top:75px;width:48px;height:18px;background:#535353;border-top:1px solid #5c5c5c"></div>
<div class="t" style="left:1144px;top:79px;color:#e6e6e6">直方图</div>
<div class="a" style="left:1135px;top:93px;width:139px;height:2px;background:#2b2b2b"></div>
<!-- layers panel -->
<div class="a" style="left:1135px;top:95px;width:139px;height:718px;background:#535353"></div>
<div class="a" style="left:1135px;top:239px;width:139px;height:574px;background:#474747"></div>
<div class="a" style="left:1135px;top:95px;width:139px;height:18px;background:#3c3c3c;border-bottom:1px solid #2e2e2e"></div>
<div class="a" style="left:1173px;top:95px;width:38px;height:17px;background:#424242;border-right:1px solid #333"></div>
<div class="a" style="left:1211px;top:95px;width:38px;height:17px;background:#424242;border-right:1px solid #333"></div>
<div class="a" style="left:1135px;top:95px;width:38px;height:18px;background:#535353;border-top:1px solid #5c5c5c"></div>
<div class="t" style="left:1144px;top:100px;color:#e6e6e6">图层</div>
<div class="t" style="left:1181px;top:100px;color:#b4b4b4">通道</div>
<div class="t" style="left:1219px;top:100px;color:#b4b4b4">路径</div>
<!-- filter row -->
<div class="a" style="left:1140px;top:116px;width:71px;height:21px;border:1px solid #3a3a3a;border-radius:3px;background:linear-gradient(#5a5a5a,#4e4e4e)"></div>
<svg class="a" style="left:1146px;top:121px" width="11" height="11"><circle cx="6.5" cy="4.5" r="3.2" fill="none" stroke="#b8b8b8" stroke-width="1.4"/><path d="M4.3 6.8 L1 10" stroke="#b8b8b8" stroke-width="1.6"/></svg>
<div class="t" style="left:1163px;top:121px;color:#cfcfcf">类型</div>
<svg class="a" style="left:1202px;top:120px" width="6" height="12"><path d="M0 4.5 L3 1 L6 4.5 Z M0 7.5 L3 11 L6 7.5 Z" fill="#c8c8c8"/></svg>
<svg class="a" style="left:1231px;top:121px" width="15" height="11"><rect x="0.5" y="0.5" width="13" height="10" fill="none" stroke="#8a8a8a"/><path d="M2 9 L5 5.5 L7.5 7.5 L9.5 5 L12 9 Z" fill="#8a8a8a"/><circle cx="10.5" cy="3" r="1" fill="#8a8a8a"/></svg>
<svg class="a" style="left:1256px;top:121px" width="11" height="11"><circle cx="5.5" cy="5.5" r="4.8" fill="#8a8a8a"/><path d="M2.3 8.7 L8.7 2.3 A4.5 4.5 0 0 1 2.3 8.7 Z" fill="#535353"/></svg>
<div class="a" style="left:1135px;top:140px;width:139px;height:1px;background:#3e3e3e"></div>
<div class="a" style="left:1135px;top:141px;width:139px;height:1px;background:#5e5e5e"></div>
<!-- blend row -->
<div class="a" style="left:1140px;top:145px;width:111px;height:20px;border:1px solid #3a3a3a;border-radius:3px;background:linear-gradient(#5a5a5a,#4e4e4e)"></div>
<div class="t" style="left:1149px;top:150px;color:#d6d6d6">正常</div>
<svg class="a" style="left:1241px;top:149px" width="6" height="12"><path d="M0 4.5 L3 1 L6 4.5 Z M0 7.5 L3 11 L6 7.5 Z" fill="#c8c8c8"/></svg>
<div class="t" style="left:1259px;top:150px;color:#cfcfcf">不透</div>
<div class="a" style="left:1135px;top:168px;width:139px;height:1px;background:#3e3e3e"></div>
<div class="a" style="left:1135px;top:169px;width:139px;height:1px;background:#5e5e5e"></div>
<!-- lock row -->
<div class="t" style="left:1143px;top:176px;color:#bdbdbd">锁定:</div>
<svg class="a" style="left:1179px;top:177px" width="13" height="13"><rect x="1" y="1" width="11" height="11" fill="#8a8a8a"/><path d="M2 2h3v3H2Z M8 2h3v3H8Z M5 5h3v3H5Z M2 8h3v3H2Z M8 8h3v3H8Z" fill="#6c6c6c"/></svg>
<svg class="a" style="left:1199px;top:175px" width="18" height="15"><path d="M16.3 0.8 Q17.6 0.6 17.2 2 L10.2 9.8 L8.6 8.3 Z" fill="#8e8e8e"/><path d="M8.3 8.6 L9.9 10.2 Q9.6 13.2 6 13.8 Q3 14.2 0.5 13.6 Q3.8 12.5 5 10.8 Q6.3 8.9 8.3 8.6 Z" fill="#8e8e8e"/></svg>
<svg class="a" style="left:1223px;top:175px" width="14" height="15"><path d="M7 0 L10.3 3.5 H8.2 V6.3 H10.6 V4.3 L14 7.5 L10.6 10.7 V8.7 H8.2 V11.5 H10.3 L7 15 L3.7 11.5 H5.8 V8.7 H3.4 V10.7 L0 7.5 L3.4 4.3 V6.3 H5.8 V3.5 H3.7 Z" fill="#8e8e8e"/></svg>
<svg class="a" style="left:1246px;top:176px" width="12" height="14"><path d="M2.8 6 V4.2 Q2.8 0.6 6 0.6 Q9.2 0.6 9.2 4.2 V6 H7.4 V4.3 Q7.4 2.3 6 2.3 Q4.6 2.3 4.6 4.3 V6 Z" fill="#8e8e8e"/><rect x="1" y="5.5" width="10" height="7.5" rx="1.2" fill="#8e8e8e"/><rect x="5.3" y="8" width="1.5" height="3" fill="#3a3a3a"/></svg>
<div class="a" style="left:1135px;top:197px;width:139px;height:1px;background:#3e3e3e"></div>
<div class="a" style="left:1135px;top:198px;width:139px;height:1px;background:#5a5a5a"></div>
<!-- layer row -->
<div class="a" style="left:1135px;top:199px;width:32px;height:39px;background:#535353"></div>
<div class="a" style="left:1167px;top:199px;width:107px;height:39px;background:#58677e"></div>
<div class="a" style="left:1135px;top:238px;width:139px;height:1px;background:#3e3e3e"></div>
<svg class="a" style="left:1144px;top:213px" width="14" height="10"><path d="M0.5 5 Q7 -2.5 13.5 5 Q7 12.5 0.5 5 Z" fill="#c6c6c6"/><circle cx="7" cy="5" r="2.8" fill="#3a3a3a"/><circle cx="6.2" cy="4.2" r="0.9" fill="#ddd"/></svg>
<div class="a" style="left:1169px;top:202px;width:30px;height:33px;background:#111"></div>
<div class="a" style="left:1171px;top:203px;width:26px;height:30px;background:#808080"></div>
<svg class="a" style="left:1168px;top:200px" width="33" height="37"><path d="M0.5 11 V0.5 H10 M22 0.5 H31.5 V11 M31.5 25 V35.5 H22 M10 35.5 H0.5 V25" fill="none" stroke="#fff" stroke-width="1.3"/></svg>
<div class="t" style="left:1208px;top:213px;color:#ffffff">图层 <span style="font-size:12px">0</span></div>
<!-- ===== Layer style dialog ===== -->
<svg width="0" height="0" style="position:absolute"><defs>
<linearGradient id="thg" x1="0" y1="0" x2="0" y2="1"><stop offset="0" stop-color="#f2f2f2"/><stop offset="1" stop-color="#c6c6c6"/></linearGradient>
<symbol id="thumb" viewBox="0 0 12 11"><path d="M5.8 0.6 L10.6 5.6 L10.6 8.6 Q10.6 10.4 9 10.4 L2.6 10.4 Q1 10.4 1 8.6 L1 5.6 Z" fill="url(#thg)" stroke="#6c6c6c" stroke-width="1"/></symbol>
</defs></svg>
<div class="dlg"></div>
<div class="a" style="left:455px;top:268px;width:611px;height:19px;background:linear-gradient(90deg,#0a246a,#a6caf0)"></div>
<div class="d" style="left:456px;top:270px;color:#fff;font-weight:bold;font-size:13px;line-height:13px;text-shadow:0.6px 0 0 #fff">图层样式</div>
<div class="rais" style="left:1048px;top:270px;width:16px;height:14px"></div>
<svg class="a" style="left:1051px;top:272px" width="10" height="10"><path d="M1.2 1.5 L8.3 8.5 M8.3 1.5 L1.2 8.5" stroke="#000" stroke-width="2.1"/></svg>

<!-- left style list -->
<div class="a" style="left:466px;top:303px;width:92px;height:448px;border:1px solid #a0a0a0"></div>
<div class="d" style="left:472px;top:305px">样式</div>
<div class="a" style="left:467px;top:325px;width:90px;height:3px;border-top:1px solid #a0a0a0;border-bottom:1px solid #a0a0a0;background:#fff"></div>
<div class="d" style="left:472px;top:329px">混合选项:默认</div>
<div class="a" style="left:467px;top:350px;width:90px;height:21px;background:#0a246a"></div>
<div class="a" style="left:467px;top:371px;width:90px;height:1px;background:#fff"></div>
<div class="cbx" style="left:472px;top:351px"></div>
<svg class="a" style="left:474px;top:353px" width="8" height="8"><path d="M1 3.5 L3 5.5 L7 1" stroke="#000" stroke-width="1.5" fill="none"/></svg>
<div class="d" style="left:487px;top:354px">斜面和浮雕</div>
<div class="a" style="left:481px;top:372px;width:76px;height:21px;background:#6f7fa3"></div>
<div class="a" style="left:467px;top:393px;width:90px;height:1px;background:#fff"></div>
<div class="cbx" style="left:486px;top:373px"></div>
<div class="d" style="left:502px;top:376px">等高线</div>
<div class="a" style="left:481px;top:394px;width:76px;height:21px;background:#6f7fa3"></div>
<div class="a" style="left:467px;top:415px;width:90px;height:1px;background:#fff"></div>
<div class="cbx" style="left:486px;top:395px"></div>
<div class="d" style="left:502px;top:398px">纹理</div>

<div class="a" style="left:467px;top:437px;width:90px;height:1px;background:#fff"></div>
<div class="a" style="left:467px;top:459px;width:90px;height:1px;background:#fff"></div>
<div class="a" style="left:467px;top:481px;width:90px;height:1px;background:#fff"></div>
<div class="a" style="left:467px;top:503px;width:90px;height:1px;background:#fff"></div>
<div class="a" style="left:467px;top:525px;width:90px;height:1px;background:#fff"></div>
<div class="a" style="left:467px;top:547px;width:90px;height:1px;background:#fff"></div>
<div class="a" style="left:467px;top:569px;width:90px;height:1px;background:#fff"></div>
<div class="a" style="left:467px;top:591px;width:90px;height:1px;background:#fff"></div>
<div class="a" style="left:467px;top:613px;width:90px;height:1px;background:#fff"></div>
<div class="cbx" style="left:472px;top:417px"></div><div class="d" style="left:487px;top:420px">描边</div>
<div class="cbx" style="left:472px;top:439px"></div><div class="d" style="left:487px;top:442px">内阴影</div>
<div class="cbx" style="left:472px;top:461px"></div><div class="d" style="left:487px;top:464px">内发光</div>
<div class="cbx" style="left:472px;top:483px"></div><div class="d" style="left:487px;top:486px">光泽</div>
<div class="cbx" style="left:472px;top:505px"></div><div class="d" style="left:487px;top:508px">颜色叠加</div>
<div class="cbx" style="left:472px;top:527px"></div><div class="d" style="left:487px;top:530px">渐变叠加</div>
<div class="cbx" style="left:472px;top:549px"></div><div class="d" style="left:487px;top:552px">图案叠加</div>
<div class="cbx" style="left:472px;top:571px"></div><div class="d" style="left:487px;top:574px">外发光</div>
<div class="cbx" style="left:472px;top:593px"></div><div class="d" style="left:487px;top:596px">投影</div>

<!-- bevel & emboss group -->
<div class="grp" style="left:574px;top:306px;width:355px;height:446px"></div>
<div class="gl" style="left:592px;top:300px">斜面和浮雕</div>
<div class="grp" style="left:584px;top:325px;width:335px;height:165px"></div>
<div class="gl" style="left:600px;top:319px">结构</div>

<div class="lbl" style="top:345px">样式(T):</div>
<div class="sunk" style="left:680px;top:340px;width:82px;height:21px"><div class="dd"></div></div>
<div class="d" style="left:686px;top:345px">内斜面</div>
<div class="lbl" style="top:371px">方法(Q):</div>
<div class="sunk" style="left:680px;top:366px;width:82px;height:21px"><div class="dd"></div></div>
<div class="d" style="left:686px;top:371px">雕刻清晰</div>

<div class="lbl" style="top:394px">深度(D):</div>
<div class="trk" style="left:684px;top:396px"></div>
<svg class="thm" style="left:689px;top:396px"><use href="#thumb"/></svg>
<div class="inp" style="left:791px;top:392px;width:54px;height:17px">100</div>
<div class="d" style="left:847px;top:394px;font-size:12px;font-weight:bold;line-height:13px">%</div>

<div class="lbl" style="top:419px">方向:</div>
<svg class="a" style="left:681px;top:419px" width="12" height="12"><circle cx="6" cy="6" r="5.3" fill="#fff" stroke="#d4d0c8" stroke-width="1.2"/><path d="M2.25 9.75 A5.3 5.3 0 0 1 9.75 2.25" fill="none" stroke="#4a4a4a" stroke-width="1.3"/><path d="M3.2 8.8 A4 4 0 0 1 8.8 3.2" fill="none" stroke="#9a9a9a" stroke-width="0.8"/><circle cx="6" cy="6" r="2.1" fill="#000"/></svg>
<div class="d" style="left:697px;top:419px">上</div>
<svg class="a" style="left:729px;top:419px" width="12" height="12"><circle cx="6" cy="6" r="5.3" fill="#fff" stroke="#d4d0c8" stroke-width="1.2"/><path d="M2.25 9.75 A5.3 5.3 0 0 1 9.75 2.25" fill="none" stroke="#4a4a4a" stroke-width="1.3"/><path d="M3.2 8.8 A4 4 0 0 1 8.8 3.2" fill="none" stroke="#9a9a9a" stroke-width="0.8"/></svg>
<div class="d" style="left:746px;top:419px">下</div>

<div class="lbl" style="top:443px">大小(Z):</div>
<div class="trk" style="left:684px;top:445px"></div>
<svg class="thm" style="left:680px;top:445px"><use href="#thumb"/></svg>
<div class="inp" style="left:791px;top:441px;width:54px;height:17px"><span style="display:inline-block;background:#0a246a;color:#fff;width:7px;height:13px;line-height:14px;vertical-align:top;margin-top:1px;text-align:center">1</span></div>
<div class="d" style="left:847px;top:443px">像素</div>

<div class="lbl" style="top:465px">软化(F):</div>
<div class="trk" style="left:684px;top:467px"></div>
<svg class="thm" style="left:680px;top:467px"><use href="#thumb"/></svg>
<div class="inp" style="left:791px;top:463px;width:54px;height:17px">0</div>
<div class="d" style="left:847px;top:465px">像素</div>

<!-- shading group -->
<div class="grp" style="left:584px;top:503px;width:335px;height:213px"></div>
<div class="gl" style="left:600px;top:497px">阴影</div>

<div class="lbl" style="top:520px">角度(N):</div>
<svg class="a" style="left:679px;top:527px" width="38" height="38"><defs><radialGradient id="cg" cx="0.45" cy="0.4" r="0.6"><stop offset="0" stop-color="#fafafa"/><stop offset="0.8" stop-color="#e8e8e8"/><stop offset="1" stop-color="#cfcfcf"/></radialGradient></defs><circle cx="19" cy="19" r="17.3" fill="url(#cg)" stroke="#43578a" stroke-width="1.6"/><g shape-rendering="crispEdges" fill="#000"><rect x="18" y="18" width="3" height="3"/><rect x="11" y="9" width="2" height="1"/><rect x="14" y="9" width="1" height="1"/><rect x="16" y="9" width="2" height="1"/><rect x="14" y="6" width="1" height="2"/><rect x="14" y="11" width="1" height="2"/></g></svg>
<div class="inp" style="left:722px;top:518px;width:41px;height:17px">120</div>
<div class="d" style="left:766px;top:520px">度</div>
<div class="cb13" style="left:722px;top:540px"></div>
<svg class="a" style="left:724px;top:542px" width="9" height="9"><path d="M1 4 L3.5 6.5 L8 1.5" stroke="#000" stroke-width="1.8" fill="none"/></svg>
<div class="d" style="left:740px;top:540px">使用全局光(G)</div>
<div class="lbl" style="top:559px">高度:</div>
<div class="inp" style="left:722px;top:557px;width:41px;height:17px">30</div>
<div class="d" style="left:766px;top:559px">度</div>

<div class="lbl" style="top:588px">光泽等高线:</div>
<div class="a" style="left:680px;top:580px;width:42px;height:30px;background:#fff;border:1px solid #000;border-color:#000 #000 #000 #000"></div>
<svg class="a" style="left:682px;top:582px" width="29" height="27"><path d="M0 27 L29 0 L29 27 Z" fill="#a0a0a0"/></svg>
<div class="a" style="left:711px;top:581px;width:1px;height:28px;background:#000"></div>
<svg class="a" style="left:713px;top:593px" width="7" height="4"><path d="M0 0 H7 L3.5 4 Z" fill="#000"/></svg>
<div class="cb13" style="left:735px;top:588px"></div>
<div class="d" style="left:752px;top:588px">消除锯齿(L)</div>

<div class="lbl" style="top:620px">高光模式(H):</div>
<div class="sunk" style="left:680px;top:615px;width:132px;height:21px"><div class="dd"></div></div>
<div class="d" style="left:686px;top:620px">滤色</div>
<div class="a" style="left:816px;top:617px;width:43px;height:17px;background:#fff;border:1px solid #a0a0a0"></div>
<div class="lbl" style="top:643px">不透明度(O):</div>
<div class="trk" style="left:684px;top:645px"></div>
<svg class="thm" style="left:753px;top:645px"><use href="#thumb"/></svg>
<div class="inp" style="left:791px;top:641px;width:54px;height:17px">75</div>
<div class="d" style="left:847px;top:643px;font-size:12px;font-weight:bold;line-height:13px">%</div>

<div class="lbl" style="top:668px">阴影模式(A):</div>
<div class="sunk" style="left:680px;top:663px;width:132px;height:21px"><div class="dd"></div></div>
<div class="d" style="left:686px;top:668px">正片叠底</div>
<div class="a" style="left:816px;top:665px;width:43px;height:17px;background:#080606;border:1px solid #a0a0a0"></div>
<div class="lbl" style="top:691px">不透明度(C):</div>
<div class="trk" style="left:684px;top:693px"></div>
<svg class="thm" style="left:753px;top:693px"><use href="#thumb"/></svg>
<div class="inp" style="left:791px;top:689px;width:54px;height:17px">75</div>
<div class="d" style="left:847px;top:691px;font-size:12px;font-weight:bold;line-height:13px">%</div>

<div class="rais" style="left:647px;top:721px;width:100px;height:21px;line-height:21px">设置为默认值</div>
<div class="rais" style="left:755px;top:721px;width:100px;height:21px;line-height:21px">复位为默认值</div>

<!-- right buttons -->
<div class="a" style="left:944px;top:302px;width:112px;height:20px;border:1px solid #000"></div>
<div class="rais" style="left:945px;top:303px;width:110px;height:18px;line-height:19px">确定</div>
<div class="rais" style="left:944px;top:330px;width:112px;height:20px;line-height:21px">复位</div>
<div class="rais" style="left:944px;top:358px;width:112px;height:20px;line-height:20px;letter-spacing:0.3px">新建样式(W)...</div>
<div class="cb13" style="left:966px;top:386px"></div>
<svg class="a" style="left:968px;top:388px" width="9" height="9"><path d="M1 4 L3.5 6.5 L8 1.5" stroke="#000" stroke-width="1.8" fill="none"/></svg>
<div class="d" style="left:984px;top:387px">预览(V)</div>
<div class="a" style="left:967px;top:407px;width:66px;height:65px;background:#d6d6d6;border:1px solid #b4b4b4"></div>
<div class="a" style="left:984px;top:425px;width:31px;height:31px;background:#595959;border:1px solid;border-color:#676767 #4c4c4c #474747 #5f5f5f"></div>
</body>
</html>
